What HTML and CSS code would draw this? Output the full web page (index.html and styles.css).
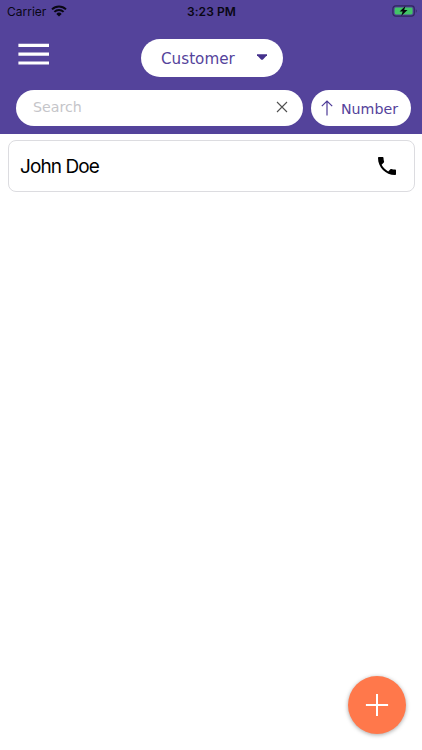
FILE: index.html
```html
<!DOCTYPE html>
<html lang="en">
<head>
    <meta charset="UTF-8">
    <meta name="viewport" content="width=device-width, initial-scale=1.0">
    <title>Customers</title>
    <link rel="stylesheet" href="styles.css">
</head>
<body>
    <header class="header">
        <div class="status-bar">
            <div class="carrier">
                <span>Carrier</span>
                <svg class="wifi" width="16" height="12" viewBox="0 0 16 12">
                    <path d="M1 4.4a10 10 0 0 1 14 0M3.4 6.9a6.6 6.6 0 0 1 9.2 0" fill="none" stroke="#090714" stroke-width="2"/>
                    <path d="M8 11.6L5.3 8.9a3.8 3.8 0 0 1 5.4 0z" fill="#090714"/>
                </svg>
            </div>
            <span class="time">3:23 PM</span>
            <svg class="battery" width="26" height="12" viewBox="0 0 26 12">
                <rect x=".9" y=".9" width="21.4" height="10.2" rx="2.8" fill="none" stroke="#30265f" stroke-width="1.2"/>
                <rect x="2.6" y="2.5" width="18" height="7" rx="1.4" fill="#42c467"/>
                <path d="M23.8 4.2c1.1.5 1.1 3.1 0 3.6z" fill="#30265f"/>
                <path d="M13.4.9L7.6 6.6h3.1l-1.5 4.5 6.3-6h-3.3z" fill="#07060f"/>
            </svg>
        </div>

        <div class="toolbar">
            <button class="menu-button" aria-label="Menu">
                <svg width="31" height="23" viewBox="0 0 31 23">
                    <path d="M.4 2.4h30.6M.4 11.2h30.6M.4 20h30.6" fill="none" stroke="#fff" stroke-width="3.2"/>
                </svg>
            </button>
            <button class="type-select">
                <span>Customer</span>
                <svg width="12" height="7" viewBox="0 0 12 7">
                    <path d="M1 .3h10v1L6.7 5.8H5.3L1 1.3z" fill="#45318c"/>
                </svg>
            </button>
        </div>

        <div class="search-row">
            <div class="search-box">
                <input type="text" class="search-input" placeholder="Search">
                <svg width="12" height="12" viewBox="0 0 12 12">
                    <path d="M1 1l10 10M11 1L1 11" fill="none" stroke="#505050" stroke-width="1.1"/>
                </svg>
            </div>
            <button class="sort-button">
                <svg width="12" height="16" viewBox="0 0 12 16">
                    <path d="M6 15.6V1M.8 6.2L6 1l5.2 5.2" fill="none" stroke="#4d3a97" stroke-width="1.2"/>
                </svg>
                <span>Number</span>
            </button>
        </div>
    </header>

    <main class="customer-list">
        <div class="customer-card">
            <span class="customer-name">John Doe</span>
            <svg width="24" height="24" viewBox="0 0 24 24">
                <path d="M6.62 10.79c1.44 2.83 3.76 5.14 6.59 6.59l2.2-2.2c.27-.27.67-.36 1.02-.24 1.12.37 2.33.57 3.57.57.55 0 1 .45 1 1V20c0 .55-.45 1-1 1-9.39 0-17-7.61-17-17 0-.55.45-1 1-1h3.5c.55 0 1 .45 1 1 0 1.25.2 2.45.57 3.57.11.35.03.74-.25 1.02l-2.2 2.2z"/>
            </svg>
        </div>
    </main>

    <button class="add-button" aria-label="Add">
        <svg width="24" height="24" viewBox="0 0 24 24">
            <path d="M12 .9v22.2M.9 12h22.2" fill="none" stroke="#fff" stroke-width="2"/>
        </svg>
    </button>
</body>
</html>
```
FILE: styles.css
```css
:root {
    --purple: #54439b;
    --orange: #ff784b;
}

* {
    box-sizing: border-box;
    margin: 0;
    padding: 0;
}

body {
    min-height: 100vh;
    background: white;
    font-family: 'DejaVu Sans', Verdana, sans-serif;
}

button {
    border: none;
    background: none;
    font-family: inherit;
    cursor: pointer;
}

svg {
    display: block;
    flex-shrink: 0;
}

.header {
    height: 134px;
    background: var(--purple);
}

.status-bar {
    display: grid;
    grid-template-columns: 1fr auto 1fr;
    align-items: center;
    height: 22px;
    padding: 0 6px 0 7px;
    font-family: Inter, sans-serif;
    font-size: 12px;
    color: #090714;
}

.carrier {
    display: flex;
    align-items: center;
    gap: 5px;
}

.wifi {
    margin-top: -1px;
}

.time {
    font-weight: 600;
    letter-spacing: 0.1px;
}

.battery {
    justify-self: end;
    margin: -1px -2px 0 0;
}

.toolbar {
    display: grid;
    grid-template-columns: 1fr auto 1fr;
    padding: 17px 16px 0 18px;
}

.menu-button {
    width: 31px;
    height: 31px;
}

.type-select {
    display: flex;
    align-items: center;
    justify-content: space-between;
    width: 142px;
    height: 38px;
    padding: 1px 15px 0 20px;
    border-radius: 19px;
    background: white;
    color: var(--purple);
    font-size: 15.2px;
}

.type-select svg {
    margin-top: -2px;
}

.search-row {
    display: flex;
    gap: 8px;
    padding: 13px 11.5px 0 15.5px;
}

.search-box {
    display: flex;
    flex: 1;
    align-items: center;
    height: 36px;
    padding: 0 14.5px 3px 17.5px;
    border-radius: 18px;
    background: white;
}

.search-input {
    flex: 1;
    min-width: 0;
    border: none;
    outline: none;
    background: none;
    font-family: inherit;
    font-size: 14.2px;
}

.search-input::placeholder {
    color: #c5c5c9;
}

.sort-button {
    display: flex;
    align-items: center;
    gap: 8px;
    width: 100px;
    height: 36px;
    padding-left: 10.5px;
    border-radius: 18px;
    background: white;
    color: var(--purple);
    font-size: 14.2px;
}

.sort-button span {
    padding-top: 2px;
}

.customer-list {
    padding: 6px 7px 0 8px;
}

.customer-card {
    display: flex;
    align-items: center;
    justify-content: space-between;
    height: 52px;
    padding: 0 15px 0 11px;
    border: 1px solid #dcdce0;
    border-radius: 8px;
}

.customer-name {
    padding-top: 1px;
    font-family: Inter, sans-serif;
    font-size: 19px;
    letter-spacing: -0.9px;
}

.add-button {
    position: fixed;
    right: 16px;
    bottom: 16px;
    display: flex;
    align-items: center;
    justify-content: center;
    width: 58px;
    height: 58px;
    border-radius: 50%;
    background: var(--orange);
    box-shadow: 0 1px 4px rgba(0, 0, 0, 0.35);
}
```
